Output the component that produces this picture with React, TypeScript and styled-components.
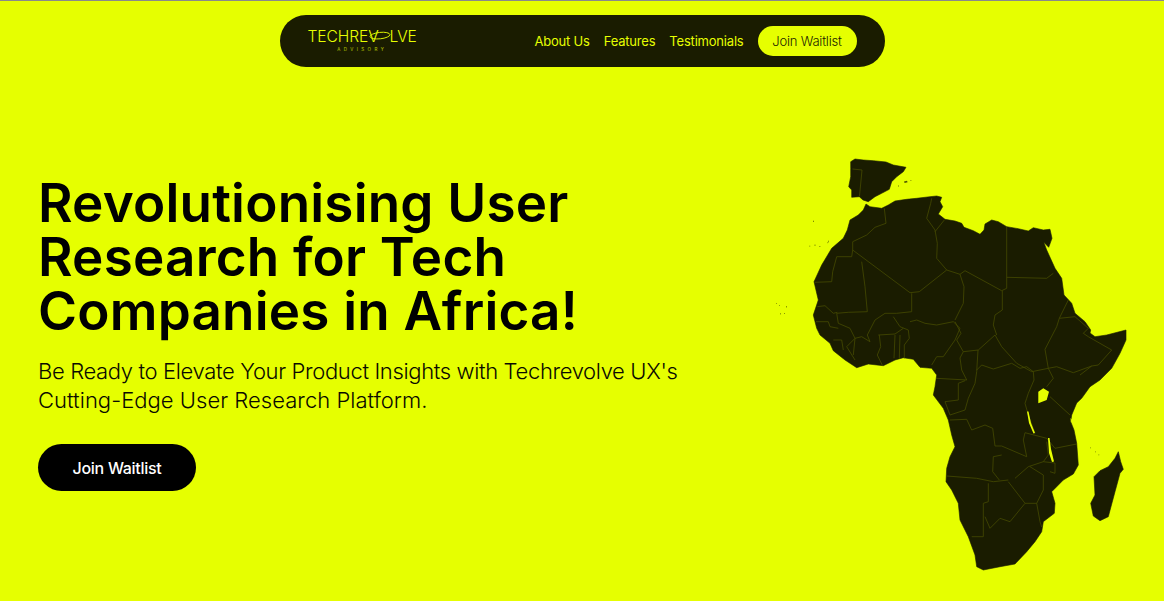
import React from 'react';
import styled, { createGlobalStyle } from 'styled-components';

const GlobalStyle = createGlobalStyle`
  html, body { margin: 0; padding: 0; background: #e6ff00; }
  body { font-family: "Inter", "Liberation Sans", sans-serif; }
`;

const Page = styled.div`
  position: relative;
  width: 1164px;
  height: 601px;
  box-sizing: border-box;
  border-top: 1px solid #8a8a8a;
  background: #e6ff00;
  overflow: hidden;
  display: flex;
  flex-direction: column;
`;

const NavRow = styled.header`
  display: flex;
  justify-content: center;
  padding-top: 14px;
`;

const NavBar = styled.nav`
  width: 605px;
  height: 52px;
  box-sizing: border-box;
  padding: 0 28px;
  border-radius: 26px;
  background: #1a1c00;
  display: flex;
  align-items: center;
  justify-content: space-between;
`;

const Logo = styled.div`
  display: flex;
  flex-direction: column;
  align-items: center;
  padding-bottom: 1px;
  color: #e6ff00;
`;

const LogoWord = styled.span`
  display: flex;
  align-items: center;
  font-size: 15.6px;
  font-weight: 300;
  letter-spacing: -0.1px;
  line-height: 18px;
`;

const LogoOval = styled.svg`
  width: 11px;
  height: 12px;
  overflow: visible;
  flex: none;
`;

const LogoTag = styled.span`
  font-size: 4.5px;
  letter-spacing: 3.4px;
  line-height: 7px;
  opacity: 0.75;
`;

const NavLinks = styled.div`
  display: flex;
  align-items: center;
  gap: 14px;
`;

const NavLink = styled.a`
  color: #e6ff00;
  font-size: 13px;
  font-weight: 400;
  letter-spacing: -0.2px;
`;

const NavButton = styled.a`
  width: 99px;
  height: 30px;
  border-radius: 15px;
  background: #e6ff00;
  color: #1a1c00;
  font-size: 13px;
  font-weight: 300;
  letter-spacing: -0.2px;
  display: flex;
  align-items: center;
  justify-content: center;
`;

const Hero = styled.main`
  flex: 1;
  padding: 109px 0 0 38px;
`;

const Title = styled.h1`
  margin: 0;
  width: 620px;
  color: #000;
  font-size: 53px;
  line-height: 54px;
  font-weight: 600;
  letter-spacing: 0.2px;
`;

const Lead = styled.p`
  margin: 19px 0 0;
  width: 700px;
  color: #0a0a00;
  font-size: 22px;
  line-height: 29px;
  font-weight: 300;
`;

const LeadLine = styled.span<{ $tracking: number }>`
  display: block;
  letter-spacing: ${(p) => p.$tracking}px;
`;

const Cta = styled.a`
  margin-top: 29px;
  width: 158px;
  height: 47px;
  border-radius: 24px;
  background: #000;
  color: #fff;
  font-size: 16px;
  font-weight: 500;
  letter-spacing: -0.3px;
  display: flex;
  align-items: center;
  justify-content: center;
`;

const MapArt = styled.svg`
  position: absolute;
  left: 0;
  top: -1px;
  width: 1164px;
  height: 601px;
  pointer-events: none;
`;

const Land = styled.path`
  fill: #1a1c00;
  stroke: #1a1c00;
  stroke-width: 0.6;
  stroke-linejoin: round;
`;

const Islands = styled.path`
  fill: #1a1c00;
  opacity: 0.75;
`;

const Border = styled.path`
  fill: none;
  stroke: #454a00;
  stroke-width: 0.8;
  stroke-linejoin: round;
`;

const Water = styled.path`
  fill: #e6ff00;
`;

const africa =
  'M866 204 L870 206.7 L881.7 208.3 L888.3 205 L895 201 L906.7 199.3 L916.7 198.3 L930 196.7 L936.7 196 L941.7 197.3 L940 201.7 L942.7 206.7 L938.3 214 L945 219.3 L955 221 L961.7 223.3 L964 227.3 L973.3 230.7 L980 234.3 L984 230 L985 224 L991.7 220 L998.3 221.7 L1006.7 226.7 L1018.3 228.7 L1028.3 231 L1033.3 227.7 L1043.3 230 L1050 229.3 L1052 238.3 L1048.7 247.3 L1043.3 241.7 L1041.7 236.7 L1046.7 250 L1055 268.3 L1061.7 278.3 L1064 295 L1071.7 303.3 L1075 313.3 L1085 321.7 L1090.7 330 L1090 333 L1095 336.7 L1106.7 335 L1126 330 L1126 340 L1120 353.3 L1111.7 368.3 L1100 380 L1090 386.7 L1081.7 398.3 L1076.7 403 L1071.7 415 L1070.7 421.7 L1074 430 L1076.7 443.3 L1078.3 465 L1073.3 474 L1063.3 480 L1056.7 486.7 L1051.7 491.7 L1055 503.3 L1054.3 513.3 L1043.3 521.7 L1041.7 531.7 L1035 541.7 L1026.7 551.7 L1015 564 L1000 566.7 L983.3 570 L976.7 566.7 L975 555 L968.3 536.7 L960 520 L958.3 503.3 L951.7 490 L946 481.7 L946.7 468.3 L950 456.7 L955 446.7 L951.7 435 L948.3 420 L943.3 408.3 L933.3 395 L935 386.7 L936.7 375 L931.7 368.3 L920 367.3 L913.3 359.3 L903.3 357.7 L895 360 L883.3 365.7 L868.3 364 L856.7 367.7 L845 360 L833.3 350.7 L830 343.3 L820 335 L816.7 328.3 L813.3 315 L818.3 300 L814 281.7 L821.7 265 L831.7 248.3 L843.3 238.3 L847.3 230 L850 220 L858.3 215 L863.3 210 Z';

const spain =
  'M850.7 161.7 L855 159 L863.3 160 L873.3 160.7 L886 162 L893.3 165 L906 167.3 L903.3 171.7 L896.7 176.7 L891.7 181.7 L889.3 189.3 L881.7 193.3 L875 196.7 L868.3 201.7 L863 200 L859.3 196.7 L851.7 197.3 L851.7 190 L848.7 186.7 L850.7 176.7 L850.7 168.3 Z';

const madagascar =
  'M1118.3 451.7 L1120.7 461.7 L1123.3 469.3 L1120 473.3 L1115 491.7 L1108.3 516.7 L1100 520.7 L1093.3 516 L1090.7 503.3 L1095 495 L1094 476.7 L1100 470.7 L1108.3 466.7 L1115 458.3 Z';

const islands =
  'M904 181.5 l3 -0.8 l0.6 1.6 l-3 0.8 Z M898 185.5 h0.8 v1 h-0.8 Z M910.5 180.2 h0.8 v0.7 h-0.8 Z M813 220.8 h0.9 v1 h-0.9 Z M809.4 245.8 h0.8 v0.7 h-0.8 Z M814.4 244.8 h1.2 v0.8 h-1.2 Z M819.4 246.2 h0.9 v0.8 h-0.9 Z M827.4 243 l1.2 -2.6 l0.4 0.3 l-1.1 2.6 Z M776 303 h0.7 v0.7 h-0.7 Z M779 305 h0.7 v0.7 h-0.7 Z M786.2 306 h0.6 v1.6 h-0.6 Z M780 313.6 h1 v0.7 h-1 Z M784 313 h0.8 v0.7 h-0.8 Z M1090 447.5 h0.7 v0.8 h-0.7 Z M1095 451.5 h0.7 v0.7 h-0.7 Z M1098.5 454.5 h0.7 v0.7 h-0.7 Z';

const borders =
  'M852.5 169 L862 170 L859.5 196 ' +
  'M884.3 208.3 L886 223.3 L875 227.3 L866.7 235 L852.7 241.7 L852.7 250 L851.7 256.7 L836.7 256.7 L832.7 271.7 L831.7 281.7 L815 282.3 ' +
  'M852.7 250 L910 292.7 L919.3 291.7 L946.7 270 L936.7 258.3 L937.3 243.3 L935 230 L926.7 218.3 L930.7 203.3 L931.7 198.3 ' +
  'M935 231.7 L944.3 220 ' +
  'M861.7 261.7 L865 286.7 L867.3 311.7 L848.3 312.3 L836.7 313.3 L838.3 323.3 L850 328.3 L855 338.3 L853.3 355 ' +
  'M817.3 306.7 L825 305.7 L833.3 313.3 L837.3 312.3 ' +
  'M946.7 270 L960 274.3 L965 270.7 L1001.7 290.7 L1006.7 288.3 L1006.7 226.7 ' +
  'M1006.7 277.3 L1046.7 278.3 L1053.3 273.3 ' +
  'M1002.3 290.7 L1002.3 310 L995 315 L993.3 325 L996.7 335 ' +
  'M960 274.3 L964 286.7 L963.3 303.3 L955 320 ' +
  'M911.7 293.3 L911.7 311.7 L896.7 313.3 L885 313.3 L875 320 L867.3 335 L870 341.7 L861.7 336.7 L855 338.3 ' +
  'M893.3 316.7 L900 326.7 L908.3 330 L909.3 338.3 L904.3 345 L904.3 358.3 ' +
  'M878.3 335 L895 334 L903.3 328.3 M895 335 L894 358.3 M900 335 L899.3 358.3 ' +
  'M879.3 335 L880.7 346.7 L877.3 355 L882.7 366 ' +
  'M855 338.3 L846.7 346.7 L855 360 ' +
  'M816 321.7 L828.3 321.7 L830 326.7 L838.3 328.3 M833.3 340 L841.7 340 L843.3 350 ' +
  'M910 321.7 L916.7 320 L925 323.3 L936.7 325 L953.3 321.7 L960 328.3 L955 340 L943.3 356.7 L936.7 356.7 L931.7 365 ' +
  'M955 321.7 L961 333.3 L956.7 340 L963.3 351.7 L978.3 350 L995 335 L1001.7 346.7 L1016.7 363.3 L1031.7 371.7 L1048.3 368.3 L1045 349.3 L1056.7 326.7 L1059.3 318.3 L1068.3 300 ' +
  'M1059.3 318.3 L1075 316.7 L1088.3 328.3 L1083.3 333.3 L1088.3 336.7 L1111.7 350 L1098.3 365 L1091.7 366 L1073.3 372.7 L1056.7 366.7 L1048.3 368.3 ' +
  'M1091.7 366 L1080 375 ' +
  'M963.3 351.7 L960 358 L961.7 370 L966.7 380 L936 378.3 ' +
  'M976.7 370 L981.7 365 L993.3 369 L1011.7 363.3 L1020 368.3 L1026.7 366.7 L1033.3 371.7 L1034 380 L1028.3 393.3 L1026.7 398.3 L1025 403.3 L1028.3 415 L1035 433.3 ' +
  'M1053.3 378.3 L1048.3 368.3 M1053.3 378.3 L1046.7 386.7 ' +
  'M978 350 L976.7 371.7 L975 383.3 L968.3 398.3 L965 410 L950 415 ' +
  'M965 380.7 L958.3 383.3 L958.3 400 L945 401.7 L950 415 ' +
  'M950 420 L966.7 419.3 L971.7 430 L985 425 L992.7 428.3 L995 446 L1001.7 446 L1026.7 456.7 L1023.3 440 L1025 432.7 L1046.7 438.3 L1055 448.3 L1076.7 444 ' +
  'M1050 396.7 L1070 415 ' +
  'M946.7 476 L976.7 478.3 L993.3 481.7 L1008.3 480 ' +
  'M1001.7 455 L993.3 456.7 L992.7 471.7 L999.3 480 ' +
  'M1015 478.3 L1028.3 466.7 L1043.3 461.7 L1048.3 455 L1046.7 441.7 ' +
  'M1043.3 461.7 L1055 463 L1055 473.3 L1050 471.7 ' +
  'M1030 466.7 L1043.3 475 L1043.3 490 L1036.7 503.3 L1025 503.3 L1008.3 481.7 ' +
  'M988.3 483.3 L988.3 501.7 L983.3 503.3 L983.3 536.7 L971.7 536.7 ' +
  'M985 516.7 L990 528.3 L1000 518.3 L1010 521.7 L1025 503.3 ' +
  'M1036.7 503.3 L1040 521.7 L1041.7 527';

const lakes =
  'M1038.3 391.7 L1043.3 388.3 L1049 391.7 L1046.7 400 L1038.3 403.3 Z ' +
  'M1027 411.5 L1028.5 411.5 L1031 423 L1035 433 L1033.5 433.5 L1029 423 Z ' +
  'M1048 438 L1049.5 438 L1051 449 L1054 461.5 L1052 462 L1049 453 Z ' +
  'M1070.5 418 L1072 420 L1071 423 Z';

function AfricaMap() {
  return (
    <MapArt viewBox="0 0 1164 601" aria-hidden="true">
      <Land d={africa} />
      <Land d={spain} />
      <Land d={madagascar} />
      <Islands d={islands} />
      <Border d={borders} />
      <Water d={lakes} />
    </MapArt>
  );
}

export default function App() {
  return (
    <Page>
      <GlobalStyle />
      <AfricaMap />
      <NavRow>
        <NavBar>
          <Logo>
            <LogoWord>
              TECHREV
              <LogoOval viewBox="0 0 11 12" fill="none" stroke="#e6ff00" strokeWidth="0.9">
                <ellipse cx="1" cy="4.6" rx="10" ry="3.2" transform="rotate(-6 1 4.6)" />
              </LogoOval>
              LVE
            </LogoWord>
            <LogoTag>ADVISORY</LogoTag>
          </Logo>
          <NavLinks>
            <NavLink>About Us</NavLink>
            <NavLink>Features</NavLink>
            <NavLink>Testimonials</NavLink>
            <NavButton>Join Waitlist</NavButton>
          </NavLinks>
        </NavBar>
      </NavRow>
      <Hero>
        <Title>Revolutionising User Research for Tech Companies in Africa!</Title>
        <Lead>
          <LeadLine $tracking={-0.35}>Be Ready to Elevate Your Product Insights with Techrevolve UX's</LeadLine>
          <LeadLine $tracking={0.03}>Cutting-Edge User Research Platform.</LeadLine>
        </Lead>
        <Cta>Join Waitlist</Cta>
      </Hero>
    </Page>
  );
}
